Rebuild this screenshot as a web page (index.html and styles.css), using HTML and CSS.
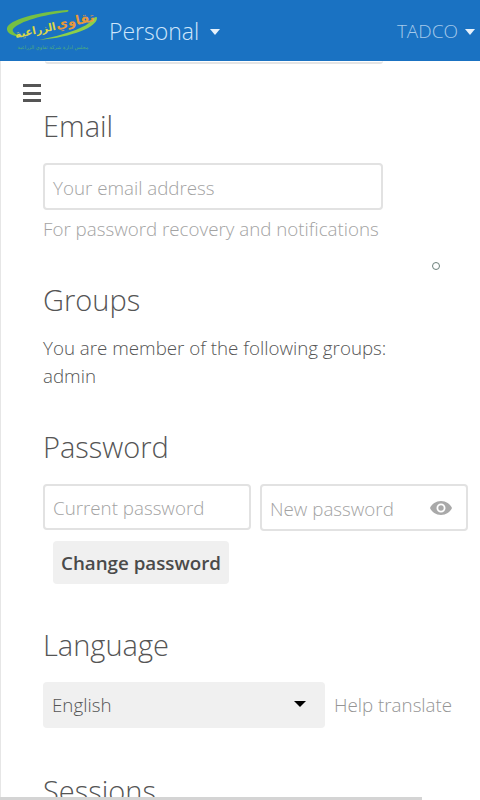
FILE: index.html
```html
<!DOCTYPE html>
<html lang="en">
<head>
<meta charset="utf-8">
<title>Personal</title>
<link rel="stylesheet" href="styles.css">
</head>
<body>
<header class="topbar">
  <svg class="logo" width="92" height="46" viewBox="0 0 92 46" aria-hidden="true">
    <path d="M0 21 C2 13 30 5 60 3 C62 3 62 4 60 5 C36 8 13 14 6 22 C4 26 12 29 18 30 C8 30 -1 27 0 21 Z" fill="#76c043"/>
    <path d="M90 11 C90 20 66 30 32 33 C56 28 80 21 86 12 C87 10 90 9 90 11 Z" fill="#8ccf4a"/>
    <text x="29" y="27" class="logo-word logo-green" text-anchor="middle" transform="rotate(-12 29 27)">الزراعية</text>
    <text x="69" y="18" class="logo-word logo-orange" text-anchor="middle" transform="rotate(-12 69 18)">تقاوي</text>
    <text x="46" y="42" class="logo-sub" text-anchor="middle">مجلس ادارة شركة تقاوي الزراعية</text>
  </svg>
  <div class="menu-title">Personal <span class="caret caret-large"></span></div>
  <div class="user">TADCO <span class="caret"></span></div>
</header>
<main class="content">
  <div class="cut-field"></div>
  <section class="email">
    <h2>Email</h2>
    <div class="field field-email"><span class="ph">Your email address</span></div>
    <p class="hint">For password recovery and notifications</p>
  </section>
  <section class="groups">
    <h2>Groups</h2>
    <p class="body-text">You are member of the following groups:<br>admin</p>
  </section>
  <section class="password">
    <h2>Password</h2>
    <div class="pw-row">
      <div class="field field-current"><span class="ph">Current password</span></div>
      <div class="field field-new"><span class="ph">New password</span>
        <svg class="eye" width="24" height="16" viewBox="0 0 24 16" aria-hidden="true">
          <path fill-rule="evenodd" d="M12 1C7 1 2.800 4 1 8c1.800 4 6 7 11 7s9.200-3 11-7c-1.800-4-6-7-11-7Zm0 11.500A4.500 4.500 0 1 1 12 3.500a4.500 4.500 0 0 1 0 9Zm0-7.200a2.700 2.700 0 1 0 0 5.400 2.700 2.700 0 0 0 0-5.400Z" fill="#a9a9a9"/>
        </svg>
      </div>
    </div>
    <button class="btn" type="button">Change password</button>
  </section>
  <section class="language">
    <h2>Language</h2>
    <div class="lang-row">
      <div class="select">English <span class="select-caret"></span></div>
      <span class="help">Help translate</span>
    </div>
  </section>
  <section class="sessions">
    <h2>Sessions</h2>
  </section>
</main>
<button class="hamburger" type="button" aria-label="Menu"><span></span><span></span><span></span></button>
<span class="spinner"></span>
<div class="scrollbar"></div>
</body>
</html>
```
FILE: styles.css
```css
* { box-sizing: border-box; }
html, body { margin: 0; height: 800px; overflow: hidden; }
body { position: relative; background: #fff; font-family: "Open Sans", sans-serif; color: #555; }

.topbar { height: 61px; background: #1a72c2; display: flex; align-items: center; position: relative; z-index: 2; padding-left: 7px; }
.logo { flex: none; margin-top: -2px; }
.logo-word { font-family: "DejaVu Sans", sans-serif; font-size: 10.500px; font-weight: 700; }
.logo-green { fill: #d9d84a; }
.logo-orange { fill: #e8983a; font-size: 13px; }
.logo-sub { font-family: "DejaVu Sans", sans-serif; font-size: 5px; fill: #4fae7a; }
.menu-title { margin-left: 10px; font-size: 23px; font-weight: 300; color: #cfe6fb; display: flex; align-items: center; gap: 11px; }
.user { margin-left: auto; padding-right: 5px; font-size: 19px; font-weight: 300; color: #a5c9ea; display: flex; align-items: center; gap: 7px; }
.caret { display: inline-block; width: 0; height: 0; border: 5px solid transparent; border-top: 6px solid #e6f1fb; border-bottom: 0; margin-top: 2px; }
.caret-large { border-left-width: 5.500px; border-right-width: 5.500px; }

.content { height: 739px; overflow: hidden; padding-left: 43px; border-left: 1px solid #e6e6e6; margin-left: 0; }
.cut-field { margin-left: 1px; width: 338px; height: 3px; border-bottom: 2px solid #e4e4e4; border-radius: 0 0 3px 3px; }

h2 { margin: 0; font-size: 29px; font-weight: 300; line-height: 37px; color: #555; }
.email { padding-top: 43px; margin-left: -1px; }
.field { border: 2px solid #e2e2e2; border-radius: 4px; background: #fff; display: flex; align-items: center; font-size: 18.750px; font-weight: 300; }
.ph { color: #a3a3a3; margin-top: 1px; }
.field-email { width: 340px; height: 47px; margin-top: 19px; padding-left: 8px; }
.hint { margin: 6px 0 0; font-size: 18.750px; font-weight: 300; line-height: 25px; color: #a3a3a3; }

.groups { padding-top: 40px; margin-left: -1px; }
.body-text { margin: 16px 0 0; font-size: 18.750px; font-weight: 300; line-height: 28px; color: #555; }

.password { padding-top: 38px; margin-left: -1px; }
.pw-row { display: flex; gap: 9px; margin-top: 19px; }
.field-current { width: 208px; height: 46px; padding-left: 8px; }
.field-new { width: 208px; height: 47px; padding: 0 13px 0 8px; justify-content: space-between; }
.btn { display: block; margin: 10px 0 0 10px; width: 176px; height: 43px; border: 0; border-radius: 4px; background: #f0f0f0; font: 600 18.750px "Open Sans", sans-serif; color: #4a4a4a; padding: 0 0 1px; }

.language { padding-top: 42px; margin-left: -1px; }
.lang-row { display: flex; align-items: center; margin-top: 19px; }
.select { width: 282px; height: 46px; background: #f0f0f0; border-radius: 4px; padding: 0 19px 2px 9px; display: flex; align-items: center; justify-content: space-between; font-size: 18.750px; font-weight: 300; color: #555; }
.select-caret { width: 0; height: 0; border: 6px solid transparent; border-top: 6px solid #000; border-bottom: 0; }
.help { margin-left: 9px; padding-bottom: 2px; font-size: 18.750px; font-weight: 300; color: #959595; }

.sessions { padding-top: 44px; margin-left: -1px; }

.hamburger { position: absolute; left: 23px; top: 84px; width: 18px; height: 18px; padding: 0; border: 0; background: none; display: flex; flex-direction: column; justify-content: space-between; }
.hamburger span { display: block; height: 3px; background: #555; }
.spinner { position: absolute; left: 432px; top: 262px; width: 8px; height: 8px; border: 1.500px solid #6b7f7a; border-radius: 50%; }
.scrollbar { position: absolute; left: 0; bottom: 0; width: 422px; height: 3px; background: #d4d4d4; }
```
